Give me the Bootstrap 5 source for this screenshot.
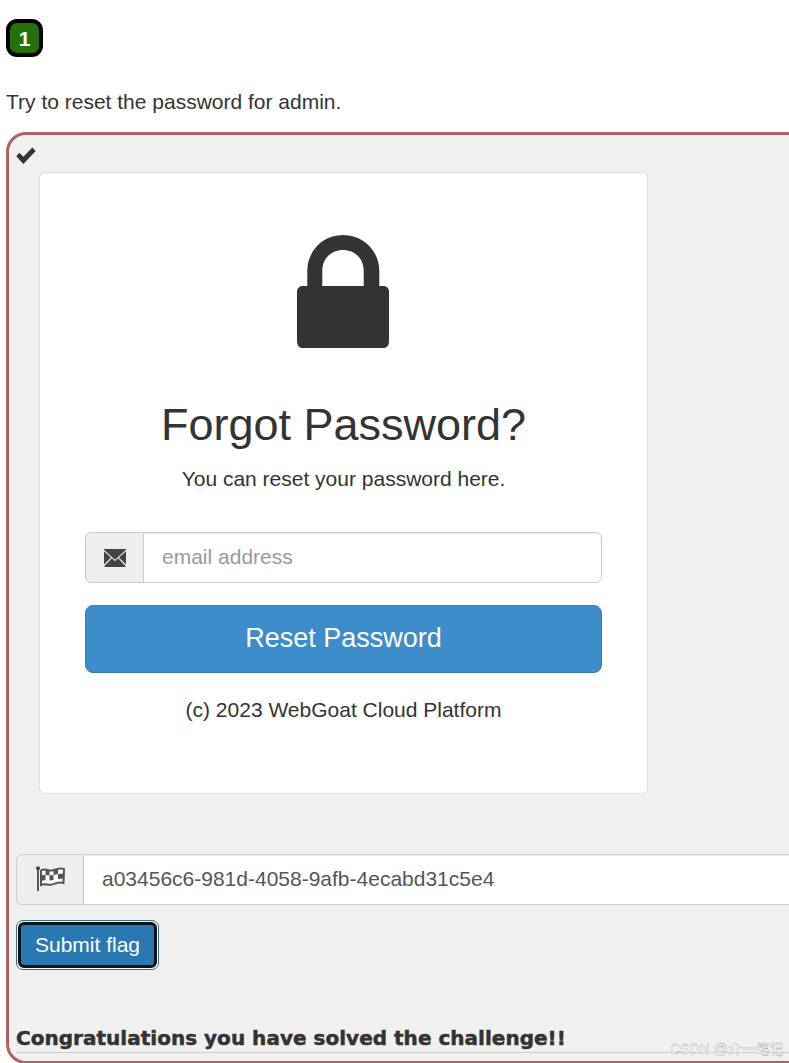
<!DOCTYPE html>
<html lang="en">
<head>
<meta charset="utf-8">
<title>Forgot Password</title>
<link href="https://cdn.jsdelivr.net/npm/bootstrap@5.3.0/dist/css/bootstrap.min.css" rel="stylesheet">
<style>
html,body{height:1063px;overflow:hidden}
body{background:#fff;color:#333;font-family:"Liberation Sans",Arial,sans-serif;font-size:21px;line-height:28px;padding:19px 0 0 6px;width:1100px}
.step-pill{display:flex;align-items:center;justify-content:center;width:37px;height:38px;background:#267010;border:4px solid #000;border-radius:11px;color:#fff;font-weight:700;font-size:21px;line-height:1}
.task-text{margin:31px 0 16px;height:28px}
.attack{width:1000px;height:932px;background:#f0f0f0;border:3px solid #ad6365;border-radius:20px;padding:12px 0 0 7px;overflow:hidden}
.tick{display:block;margin-bottom:6px;height:19px}
.tick svg{display:block;width:20px;height:18px}
.fp-card{width:609px;height:622px;margin-left:23px;background:#fff;border:1px solid #ddd;border-radius:6px;padding:62px 45px 0;text-align:center;color:#333}
.fp-lock{display:block;width:92px;height:115px;margin:0 0 50px 212px}
.fp-title{font-size:45px;line-height:50px;margin:0 0 15px;font-weight:400;font-family:inherit;color:#333}
.fp-sub{font-size:21px;line-height:28px;margin:0 0 39px}
.fp-group{height:51px;margin-bottom:22px}
.addon{width:59px;justify-content:center;background:#eee;border:1px solid #ccc;border-radius:6px 0 0 6px;padding:0}
.fp-group .form-control,.flag-group .form-control{font-size:21px;line-height:28px;height:auto;color:#555;border-color:#ccc;padding:0 18px 2px;border-radius:0 6px 6px 0;font-family:inherit;box-shadow:inset 0 1px 1px rgba(0,0,0,.075)}
.form-control::placeholder{color:#999;opacity:1}
.fp-reset{display:block;width:100%;height:68px;background:#3c8dc9;border:1px solid #337fb5;border-radius:8px;color:#fff;font-size:27px;line-height:34px;padding:0 0 2px}
.fp-foot{margin:23px 0 0;font-size:21px;line-height:28px}
.flag-group{width:975px;height:51px;margin:60px 0 15px}
.flag-group .addon{width:68px}
.flag-group .form-control{background:#fff}
.flag-wrap{display:inline-block;padding:1px;border:1px solid #2e6da4;border-radius:7px;background:#fff;line-height:0}
.flag-btn{display:block;width:139px;height:46px;background:#2a78b2;border:3px solid #111;border-radius:6px;color:#fff;font-size:21px;line-height:28px;padding:0}
.congrats{margin:54px 0 0;height:28px;font-size:20px;line-height:28px;font-weight:700;font-family:"DejaVu Sans",sans-serif;letter-spacing:.02px;-webkit-text-stroke:.5px #333;color:#333}
.congrats-rule{margin:0;width:975px;border:0;border-top:1px solid #ccc;opacity:1}
.wm{position:absolute;left:670px;top:1040px;font-size:14px;line-height:18px;color:#fff;font-family:"Liberation Sans","Noto Sans CJK SC",sans-serif;-webkit-text-stroke:.3px #999;white-space:nowrap}
</style>
</head>
<body>
<div class="step-pill">1</div>
<p class="task-text">Try to reset the password for admin.</p>
<div class="attack">
  <span class="tick"><svg viewBox="0 0 20 18" aria-hidden="true"><path fill="#333" d="M0.300 9.300 3.300 5.800 7.400 9.700 16.300 .6 19.700 4 7.400 17Z"/></svg></span>
  <div class="fp-card">
    <svg class="fp-lock" viewBox="0 0 92 115" aria-hidden="true"><path fill="#333" fill-rule="evenodd" d="M10.300 51V36C10.300 15.500 26 0 46 0S82.300 15.500 82.300 36V51H86C90 51 92 53.500 92 57V106C92 110.500 90 113 86 113H6C2 113 0 110.500 0 106V57C0 53.500 2 51 6 51ZM25.300 51H66.700V36C66.700 23.500 58 15 46 15S25.300 23.500 25.300 36Z"/></svg>
    <h2 class="fp-title">Forgot Password?</h2>
    <p class="fp-sub">You can reset your password here.</p>
    <div class="input-group fp-group">
      <span class="input-group-text addon"><svg width="22" height="18" viewBox="0 0 22 18" aria-hidden="true"><path fill="#444" d="M0 0H22V.8L11 10.800 0 .8ZM0 2.200 7 8.400 0 15.500ZM22 2.200 15 8.400 22 15.500ZM7.900 9.300 11 12.200 14.100 9.300 21.500 17V18H.5V17Z"/></svg></span>
      <input type="text" class="form-control" placeholder="email address">
    </div>
    <button type="button" class="btn fp-reset">Reset Password</button>
    <p class="fp-foot">(c) 2023 WebGoat Cloud Platform</p>
  </div>
  <div class="input-group flag-group">
    <span class="input-group-text addon"><svg width="30" height="27" viewBox="0 0 30 27" aria-hidden="true"><path fill="#5a5a5a" d="M2 3H4V25H2Z"/><circle cx="3" cy="2.200" r="2" fill="#444"/><path fill="#fff" stroke="#555" stroke-width="2" d="M6 4.500C10 2 13 5 17 4.500S24 1.500 29 3L28.500 17C24 15.500 21 17.500 17 18.500S10 17 6 19Z"/><path fill="#555" d="M10.500 4 14.500 5V9.500L10.500 9ZM18.500 4 23 3V8L18.500 9ZM14.500 9.500 18.500 9V14L14.500 14.500ZM23 8 28.500 7.500V12.500L23 13ZM6.500 9 10.500 9V14L6.500 15Z"/></svg></span>
    <input type="text" class="form-control" value="a03456c6-981d-4058-9afb-4ecabd31c5e4">
  </div>
  <span class="flag-wrap"><button type="button" class="btn flag-btn">Submit flag</button></span>
  <div class="congrats">Congratulations you have solved the challenge!!</div>
  <hr class="congrats-rule">
</div>
<div class="wm">CSDN @介一笔记</div>
</body>
</html>
